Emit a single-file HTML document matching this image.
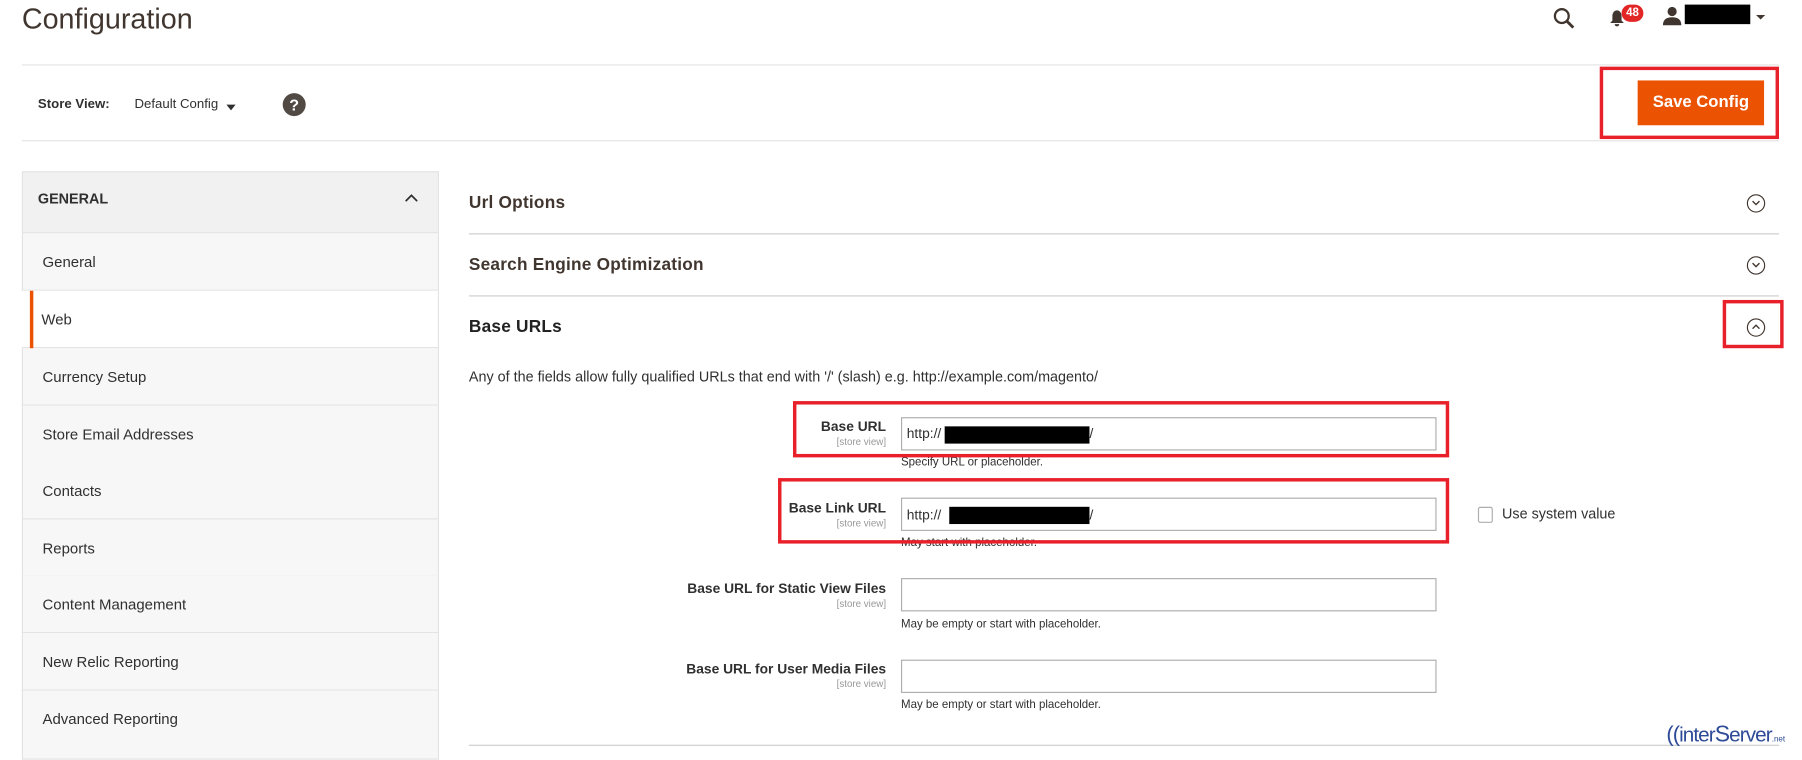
<!DOCTYPE html>
<html><head><meta charset="utf-8"><style>
*{margin:0;padding:0;box-sizing:border-box}
html,body{width:1802px;height:752px;overflow:hidden;background:#fff}
#w{position:absolute;left:0;top:0;width:1568px;height:654px;transform:scale(1.14923);transform-origin:0 0;font-family:"Liberation Sans",sans-serif;color:#303030}
.a{position:absolute;white-space:nowrap}
.hl{position:absolute;height:1px;background:#e3e3e3}
.red{position:absolute;border:3px solid #e8202a}
.side{position:absolute;left:19px;width:363px;background:#f7f7f7;border:1px solid #e3e3e3;border-top:none;height:50px}
.side span{position:absolute;left:17px;top:50%;transform:translateY(-50%);font-size:13px;color:#303030}
.sec{font-size:15px;font-weight:bold;color:#41362f;letter-spacing:0.2px}
.inp{position:absolute;left:784px;width:466px;height:29px;border:1px solid #adadad;background:#fff}
.lbl{position:absolute;right:797px;text-align:right;font-size:12px;font-weight:bold;color:#303030;white-space:nowrap}
.sv{position:absolute;right:797px;font-size:8.5px;color:#999;white-space:nowrap}
.note{position:absolute;left:784px;font-size:10px;color:#303030;white-space:nowrap}
.circ{position:absolute;width:16px;height:16px;border:1px solid #41362f;border-radius:50%}
</style></head><body><div id="w">
<div class="a" style="left:19px;top:3px;font-size:25px;color:#41362f">Configuration</div>
<svg class="a" style="left:1351px;top:6px" width="20" height="20" viewBox="0 0 20 20"><circle cx="8" cy="8" r="6" fill="none" stroke="#41362f" stroke-width="2"/><path d="M12.5 12.5L18 18" stroke="#41362f" stroke-width="2.5"/></svg>
<svg class="a" style="left:1400px;top:8px" width="14" height="16" viewBox="0 0 14 16"><path d="M7 1C4 1 3 4 3 6v4L1 12h12l-2-2V6c0-2-1-5-4-5z M5 13a2 2 0 0 0 4 0z" fill="#41362f"/></svg>
<div class="a" style="left:1411px;top:4px;width:19px;height:15px;border-radius:8px;background:#e22626;color:#fff;font-size:10px;font-weight:bold;text-align:center;line-height:15px">48</div>
<svg class="a" style="left:1446px;top:5px" width="18" height="18" viewBox="0 0 18 18"><circle cx="9" cy="5" r="4" fill="#41362f"/><path d="M1 17c0-5 3-7 8-7s8 2 8 7z" fill="#41362f"/></svg>
<div class="a" style="left:1466px;top:4px;width:57px;height:17px;background:#000"></div>
<div class="a" style="left:1528px;top:13px;border-left:4px solid transparent;border-right:4px solid transparent;border-top:4px solid #41362f"></div>
<div class="hl" style="left:19px;top:56px;width:1529px"></div>
<div class="a" style="left:33px;top:85px;font-size:11.5px;font-weight:bold">Store View:</div>
<div class="a" style="left:117px;top:85px;font-size:11.5px">Default Config</div>
<div class="a" style="left:197px;top:91px;border-left:4px solid transparent;border-right:4px solid transparent;border-top:5px solid #303030"></div>
<div class="a" style="left:246px;top:81px;width:20px;height:20px;border-radius:50%;background:#514943;color:#fff;font-weight:bold;font-size:14px;text-align:center;line-height:20px">?</div>
<div class="a" style="left:1425px;top:70px;width:110px;height:39px;background:#eb5202;color:#fff;font-size:14.5px;font-weight:bold;text-align:center;line-height:39px">Save Config</div>
<div class="red" style="left:1392px;top:58px;width:156px;height:63px"></div>
<div class="hl" style="left:19px;top:122px;width:1529px"></div>
<div class="a" style="left:19px;top:149px;width:363px;height:54px;background:#f1f1f1;border:1px solid #e3e3e3"></div>
<div class="a" style="left:33px;top:166px;font-size:12.5px;font-weight:bold;color:#303030">GENERAL</div>
<svg class="a" style="left:352px;top:168px" width="12" height="8" viewBox="0 0 12 8"><path d="M1 7L6 2L11 7" fill="none" stroke="#303030" stroke-width="1.5"/></svg>
<div class="side" style="top:203px"><span style="top:52%">General</span></div>
<div class="side" style="top:253px;background:#fff;border-left:none"><span>Web</span></div>
<div class="a" style="left:26px;top:253px;width:3px;height:51px;background:#eb5202"></div>
<div class="side" style="top:303px"><span>Currency Setup</span></div>
<div class="side" style="top:353px"><span>Store Email Addresses</span></div>
<div class="side" style="top:402px"><span>Contacts</span></div>
<div class="side" style="top:452px"><span>Reports</span></div>
<div class="side" style="top:501px"><span>Content Management</span></div>
<div class="side" style="top:551px"><span>New Relic Reporting</span></div>
<div class="side" style="top:601px;height:60px"><span style="top:17px;transform:none">Advanced Reporting</span></div>
<div class="a sec" style="left:408px;top:168px;color:#41362f">Url Options</div>
<div class="circ" style="left:1520px;top:169px"></div><svg class="a" style="left:1524px;top:174px" width="8" height="6"><path d="M1 1L4 4L7 1" fill="none" stroke="#41362f" stroke-width="1.2"/></svg>
<div class="hl" style="left:408px;top:203px;width:1140px;background:#ccc"></div>
<div class="a sec" style="left:408px;top:222px">Search Engine Optimization</div>
<div class="circ" style="left:1520px;top:223px"></div><svg class="a" style="left:1524px;top:228px" width="8" height="6"><path d="M1 1L4 4L7 1" fill="none" stroke="#41362f" stroke-width="1.2"/></svg>
<div class="hl" style="left:408px;top:257px;width:1140px;background:#ccc"></div>
<div class="a sec" style="left:408px;top:276px;color:#222">Base URLs</div>
<div class="circ" style="left:1520px;top:277px"></div><svg class="a" style="left:1524px;top:281px" width="8" height="6"><path d="M1 5L4 2L7 5" fill="none" stroke="#41362f" stroke-width="1.2"/></svg>
<div class="red" style="left:1499px;top:261px;width:53px;height:42px"></div>
<div class="a" style="left:408px;top:321px;font-size:12.5px">Any of the fields allow fully qualified URLs that end with '/' (slash) e.g. http://example.com/magento/</div>

<div class="lbl" style="top:364px">Base URL</div><div class="sv" style="top:379px">[store view]</div>
<div class="inp" style="top:363px"></div>
<div class="a" style="left:789px;top:370px;font-size:12px">http://</div>
<div class="a" style="left:822px;top:371px;width:126px;height:15px;background:#000"></div>
<div class="a" style="left:948px;top:370px;font-size:12px">/</div>
<div class="note" style="top:397px">Specify URL or placeholder.</div>
<div class="red" style="left:690px;top:349px;width:571px;height:49px"></div>

<div class="lbl" style="top:435px">Base Link URL</div><div class="sv" style="top:450px">[store view]</div>
<div class="inp" style="top:433px"></div>
<div class="a" style="left:789px;top:441px;font-size:12px">http://</div>
<div class="a" style="left:826px;top:441px;width:122px;height:15px;background:#000"></div>
<div class="a" style="left:948px;top:441px;font-size:12px">/</div>
<div class="note" style="top:467px">May start with placeholder.</div>
<div class="red" style="left:677px;top:416px;width:584px;height:57px;background:none"></div>
<div class="a" style="left:1286px;top:441px;width:13px;height:14px;border:1px solid #adadad;border-radius:2px"></div>
<div class="a" style="left:1307px;top:440px;font-size:12.5px">Use system value</div>

<div class="lbl" style="top:505px">Base URL for Static View Files</div><div class="sv" style="top:520px">[store view]</div>
<div class="inp" style="top:503px"></div>
<div class="note" style="top:538px">May be empty or start with placeholder.</div>

<div class="lbl" style="top:575px">Base URL for User Media Files</div><div class="sv" style="top:590px">[store view]</div>
<div class="inp" style="top:574px"></div>
<div class="note" style="top:608px">May be empty or start with placeholder.</div>

<div class="hl" style="left:408px;top:648px;width:1140px;background:#ccc"></div>
<div class="a" style="left:1450px;top:628px;font-size:18px;color:#2d4b96;letter-spacing:-0.8px"><span style="font-size:19px">((</span>inter<span style="font-size:20px">S</span>erver<span style="font-size:7px;letter-spacing:0">.net</span></div>
</div></body></html>
